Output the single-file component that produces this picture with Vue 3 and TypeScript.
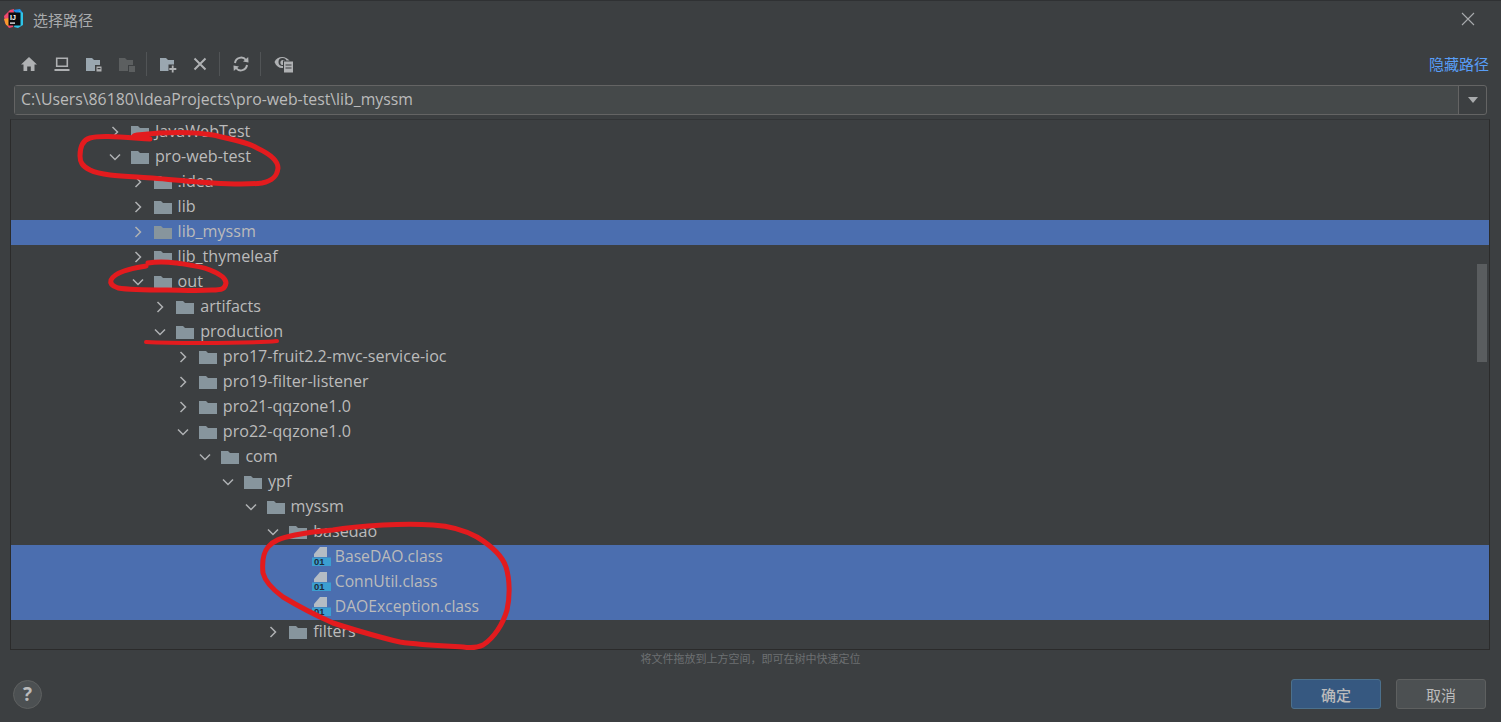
<template>
  <div class="dialog">
    <!-- title bar -->
    <header class="title-bar">
      <svg class="app-logo" width="20" height="20" viewBox="0 0 20 20">
        <path d="M6 1 L10 0 L9 18 L5 19 L1 14 L0 7 Z" fill="#f0476d" />
        <path d="M0 10 L5 9 L5 17 L2 16 Z" fill="#f89a2c" />
        <path d="M9 1 L16 0 L19 4 L14 6 Z" fill="#1f8fe8" />
        <path d="M15 2 L19 4 L19 16 L14 19 L10 18 Z" fill="#2fc4e8" />
        <rect x="4.5" y="3.5" width="12" height="13" fill="#0c0c0e" />
        <rect x="6" y="13.5" width="5" height="1.2" fill="#fff" />
        <text x="6" y="11" class="logo-text">IJ</text>
      </svg>
      <span class="title">选择路径</span>
      <svg class="close" width="14" height="14" viewBox="0 0 14 14">
        <path d="M1 1 L13 13 M13 1 L1 13" stroke="#a9abad" stroke-width="1.1" fill="none" />
      </svg>
    </header>

    <!-- toolbar -->
    <div class="toolbar">
      <div class="tools">
        <svg class="ico" viewBox="0 0 18 18"><path d="M9 2 L17 9.5 L14.5 9.5 L14.5 16 L10.8 16 L10.8 11.5 L7.2 11.5 L7.2 16 L3.5 16 L3.5 9.5 L1 9.5 Z" fill="#afb1b3" /></svg>
        <svg class="ico" viewBox="0 0 18 18"><path d="M3.7 3.2 H14.3 V11.3 H3.7 Z" fill="none" stroke="#afb1b3" stroke-width="1.6" /><rect x="1.5" y="14" width="15" height="2" fill="#afb1b3" /></svg>
        <svg class="ico" viewBox="0 0 18 18"><path d="M1 3 H7 L9 5 H15 V16 H1 Z" fill="#9aa7b0" /><rect x="10" y="10" width="7" height="7" fill="#3c3f41" /><rect x="11.5" y="11.5" width="5" height="5" fill="#afb1b3" /><rect x="12.5" y="13" width="3" height="1.2" fill="#3c3f41" /></svg>
        <svg class="ico" viewBox="0 0 18 18"><path d="M1 3 H7 L9 5 H15 V16 H1 Z" fill="#5c5f60" /><rect x="10" y="10" width="7" height="7" fill="#3c3f41" /><rect x="11" y="11" width="6" height="6" fill="#5c5f60" /></svg>
        <i class="sep"></i>
        <svg class="ico" viewBox="0 0 18 18"><path d="M1 3 H7 L9 5 H15 V16 H1 Z" fill="#9aa7b0" /><rect x="9.5" y="9.5" width="8.5" height="8.5" fill="#3c3f41" /><path d="M13.7 10.5 V17.5 M10.3 14 H17.3" stroke="#afb1b3" stroke-width="1.8" /></svg>
        <svg class="ico" viewBox="0 0 18 18"><path d="M3.5 3.5 L14.5 14.5 M14.5 3.5 L3.5 14.5" stroke="#afb1b3" stroke-width="2" fill="none" /></svg>
        <i class="sep"></i>
        <svg class="ico" viewBox="0 0 18 18">
          <path d="M3 8 A6.2 6.2 0 0 1 14 5" fill="none" stroke="#afb1b3" stroke-width="2" />
          <path d="M11 6.6 L16.5 7.6 L16.2 2 Z" fill="#afb1b3" />
          <path d="M15 10 A6.2 6.2 0 0 1 4 13" fill="none" stroke="#afb1b3" stroke-width="2" />
          <path d="M7 11.4 L1.5 10.4 L1.8 16 Z" fill="#afb1b3" />
        </svg>
        <i class="sep"></i>
        <svg class="ico eye" viewBox="0 0 20 20">
          <path d="M0.5 8 C3 2 12 1 16.5 8 L12 14 H8 C5 14 2 12 0.5 8 Z" fill="#afb1b3" />
          <circle cx="8.5" cy="8" r="4" fill="#3c3f41" />
          <circle cx="9" cy="8.5" r="2.6" fill="#afb1b3" />
          <rect x="9" y="6.5" width="11" height="13" fill="#3c3f41" />
          <rect x="10" y="7.5" width="9" height="11" fill="#afb1b3" />
          <path d="M11.5 11 H17.5 M11.5 14 H17.5" stroke="#3c3f41" stroke-width="1.2" />
        </svg>
      </div>
      <a class="hide-path">隐藏路径</a>
    </div>

    <!-- path field -->
    <div class="path-field">
      <div class="path-input">C:\Users\86180\IdeaProjects\pro-web-test\lib_myssm</div>
      <div class="path-drop"><i class="drop-arrow"></i></div>
    </div>

    <!-- file tree -->
    <div class="tree">
      <div
        v-for="row in rows"
        :key="row.name"
        class="row"
        :class="{ selected: row.selected, 'is-class': row.kind === 'class' }"
      >
        <div class="row-inner" :style="{ paddingLeft: 97 + row.level * 22.6 + 'px' }">
          <svg v-if="row.kind !== 'class'" class="chevron" width="14" height="14" viewBox="0 0 14 14">
            <path v-if="row.open" d="M2 4.5 L7 9.5 L12 4.5" />
            <path v-else d="M4.5 2 L9.5 7 L4.5 12" />
          </svg>
          <span v-else class="chevron-gap"></span>
          <svg v-if="row.kind !== 'class'" class="folder" width="18" height="14" viewBox="0 0 18 14">
            <path d="M0 1 H7 L9 3 H18 V14 H0 Z" fill="#87959d" />
          </svg>
          <svg v-else class="class-ico" width="19" height="19" viewBox="0 0 19 19">
            <path d="M2 10 V7 L8 0 H15 V10 Z" fill="#b4bcc4" />
            <rect x="0" y="10.5" width="19" height="8.5" fill="#3b9fd1" />
            <text x="2" y="18.2" class="bits">01</text>
          </svg>
          <span class="name">{{ row.name }}</span>
        </div>
      </div>
      <div class="scrollbar"></div>
    </div>

    <div class="hint">将文件拖放到上方空间，即可在树中快速定位</div>

    <!-- footer -->
    <footer class="footer">
      <button class="help">?</button>
      <div class="actions">
        <button class="btn primary">确定</button>
        <button class="btn">取消</button>
      </div>
    </footer>

    <!-- red marker strokes drawn over the screenshot -->
    <svg class="marks" width="1501" height="722" viewBox="0 0 1501 722">
      <path d="M150 139 C137 137 130 136 137 135 C165 132 195 132 213 135 C235 140 250 143 257 148 C270 154 278 160 278 168 C277 177 272 181 262 183 C245 185 228 184 213 183 C190 182 160 178 137 177 C118 176 100 175 90 170 C82 166 80 162 80 156 C80 146 83 140 90 138 C100 135 120 137 150 139" />
      <path d="M148 263 C160 261 168 262 177 263 C190 265 200 266 210 270 C220 274 226 278 226 283 C225 289 222 290 212 290 C195 291 180 290 167 290 C150 290 130 290 118 288 C112 286 110 283 111 280 C113 276 118 273 124 271 C132 268 140 267 146 266" />
      <path class="thin" d="M146 342 C165 343 185 343 200 343 C225 343 255 343 277 341" />
      <path d="M295 535 C310 532 320 531 333 530 C350 527 365 526 383 525 C400 524 420 524 433 525 C450 526 466 531 477 537 C490 545 502 555 506 567 C510 580 510 597 507 610 C503 624 494 638 483 645 C477 648 470 648 463 647 C445 646 420 645 400 642 C378 637 355 630 333 623 C315 615 298 606 283 597 C272 589 265 581 263 573 C262 563 263 553 268 547 C273 541 280 538 295 535" />
    </svg>
  </div>
</template>

<script setup lang="ts">
interface Row {
  name: string
  level: number
  open?: boolean
  selected?: boolean
  kind?: 'class'
}

const rows: Row[] = [
  { name: 'JavaWebTest', level: 0 },
  { name: 'pro-web-test', level: 0, open: true },
  { name: '.idea', level: 1 },
  { name: 'lib', level: 1 },
  { name: 'lib_myssm', level: 1, selected: true },
  { name: 'lib_thymeleaf', level: 1 },
  { name: 'out', level: 1, open: true },
  { name: 'artifacts', level: 2 },
  { name: 'production', level: 2, open: true },
  { name: 'pro17-fruit2.2-mvc-service-ioc', level: 3 },
  { name: 'pro19-filter-listener', level: 3 },
  { name: 'pro21-qqzone1.0', level: 3 },
  { name: 'pro22-qqzone1.0', level: 3, open: true },
  { name: 'com', level: 4, open: true },
  { name: 'ypf', level: 5, open: true },
  { name: 'myssm', level: 6, open: true },
  { name: 'basedao', level: 7, open: true },
  { name: 'BaseDAO.class', level: 8, selected: true, kind: 'class' },
  { name: 'ConnUtil.class', level: 8, selected: true, kind: 'class' },
  { name: 'DAOException.class', level: 8, selected: true, kind: 'class' },
  { name: 'filters', level: 7 }
]
</script>

<style>
html,
body {
  margin: 0;
  background: #3c3f41;
}
</style>

<style scoped>
.dialog {
  position: relative;
  width: 1501px;
  height: 722px;
  box-sizing: border-box;
  overflow: hidden;
  background: #3c3f41;
  border-top: 1px solid #2f3133;
  color: #bbbbbb;
  font-family: "Open Sans", "Noto Sans CJK SC", sans-serif;
  font-size: 15.8px;
}

.title-bar {
  display: flex;
  align-items: center;
  height: 36px;
  padding: 0 26px 0 4px;
}

.app-logo {
  flex: none;
}

.logo-text {
  fill: #fff;
  font: 700 7px "Liberation Sans", sans-serif;
}

.title {
  margin-left: 9px;
  flex: 1;
  font-size: 15px;
  color: #a9abad;
}

.toolbar {
  display: flex;
  align-items: center;
  justify-content: space-between;
  height: 46px;
  padding: 7px 12px 0 20px;
  box-sizing: border-box;
}

.tools {
  display: flex;
  align-items: center;
}

.ico {
  width: 18px;
  height: 18px;
  flex: none;
  margin-right: 14.7px;
}

.ico.eye {
  width: 20px;
  height: 20px;
  margin-left: 1px;
}

.sep {
  width: 1px;
  height: 24px;
  background: #515456;
  margin: 0 12px 0 -5px;
}

.hide-path {
  color: #589df6;
  font-size: 15px;
}

.path-field {
  display: flex;
  height: 30px;
  margin: 2px 14px 0;
  box-sizing: border-box;
  border: 1px solid #646464;
  border-radius: 3px;
}

.path-input {
  flex: 1;
  background: #45494a;
  padding-left: 6px;
  line-height: 26px;
}

.path-drop {
  width: 27px;
  display: flex;
  align-items: center;
  justify-content: center;
  border-left: 1px solid #646464;
}

.drop-arrow {
  width: 0;
  height: 0;
  border-left: 5.5px solid transparent;
  border-right: 5.5px solid transparent;
  border-top: 6px solid #a9abad;
}

.tree {
  position: relative;
  height: 531px;
  margin: 4px 11px 0 10px;
  box-sizing: border-box;
  overflow: hidden;
  border: 1px solid #2b2b2b;
  border-top-color: #323436;
}

.row {
  height: 25px;
}

.row.selected {
  background: #4b6eaf;
}

.row-inner {
  display: flex;
  align-items: center;
  height: 100%;
}

.chevron {
  flex: none;
  margin: 0 9px 2px 0;
}

.chevron path {
  fill: none;
  stroke: #afb1b3;
  stroke-width: 1.5;
}

.chevron-gap {
  width: 23px;
  flex: none;
}

.folder {
  flex: none;
  margin: 0 6px 2px 0;
}

.class-ico {
  flex: none;
  margin: 0 4px 2px 0;
}

.bits {
  fill: #1d2c3a;
  font: 700 9.5px "Liberation Sans", sans-serif;
}

.name {
  white-space: nowrap;
  padding-bottom: 4px;
  font-size: 16.1px;
}

.is-class .name {
  font-size: 15.7px;
}

.scrollbar {
  position: absolute;
  top: 144px;
  right: 2px;
  width: 10px;
  height: 98px;
  background: #5a5d5f;
}

.hint {
  height: 18px;
  line-height: 18px;
  margin-top: 0;
  text-align: center;
  font-size: 11px;
  color: #6d7072;
}

.footer {
  display: flex;
  align-items: center;
  justify-content: space-between;
  height: 30px;
  margin-top: 11px;
  padding: 0 15px 0 13px;
}

.help {
  width: 29px;
  height: 29px;
  padding: 0;
  border-radius: 50%;
  border: 1px solid #5e6060;
  background: #4c5052;
  color: #bbbbbb;
  font: 700 19px "Open Sans", sans-serif;
}

.actions {
  display: flex;
  gap: 15px;
}

.btn {
  width: 90px;
  height: 30px;
  padding: 0;
  box-sizing: border-box;
  border: 1px solid #5e6060;
  border-radius: 3px;
  background: #4c5052;
  color: #bbbbbb;
  font-family: "Noto Sans CJK SC", sans-serif;
  font-size: 15px;
}

.btn.primary {
  border-color: #4c708c;
  background: #365880;
  font-weight: 500;
}

.marks {
  position: absolute;
  left: 0;
  top: -1px;
  pointer-events: none;
}

.marks path {
  fill: none;
  stroke: #e31b1e;
  stroke-width: 5;
  stroke-linecap: round;
  stroke-linejoin: round;
}

.marks path.thin {
  stroke-width: 4;
}
</style>
